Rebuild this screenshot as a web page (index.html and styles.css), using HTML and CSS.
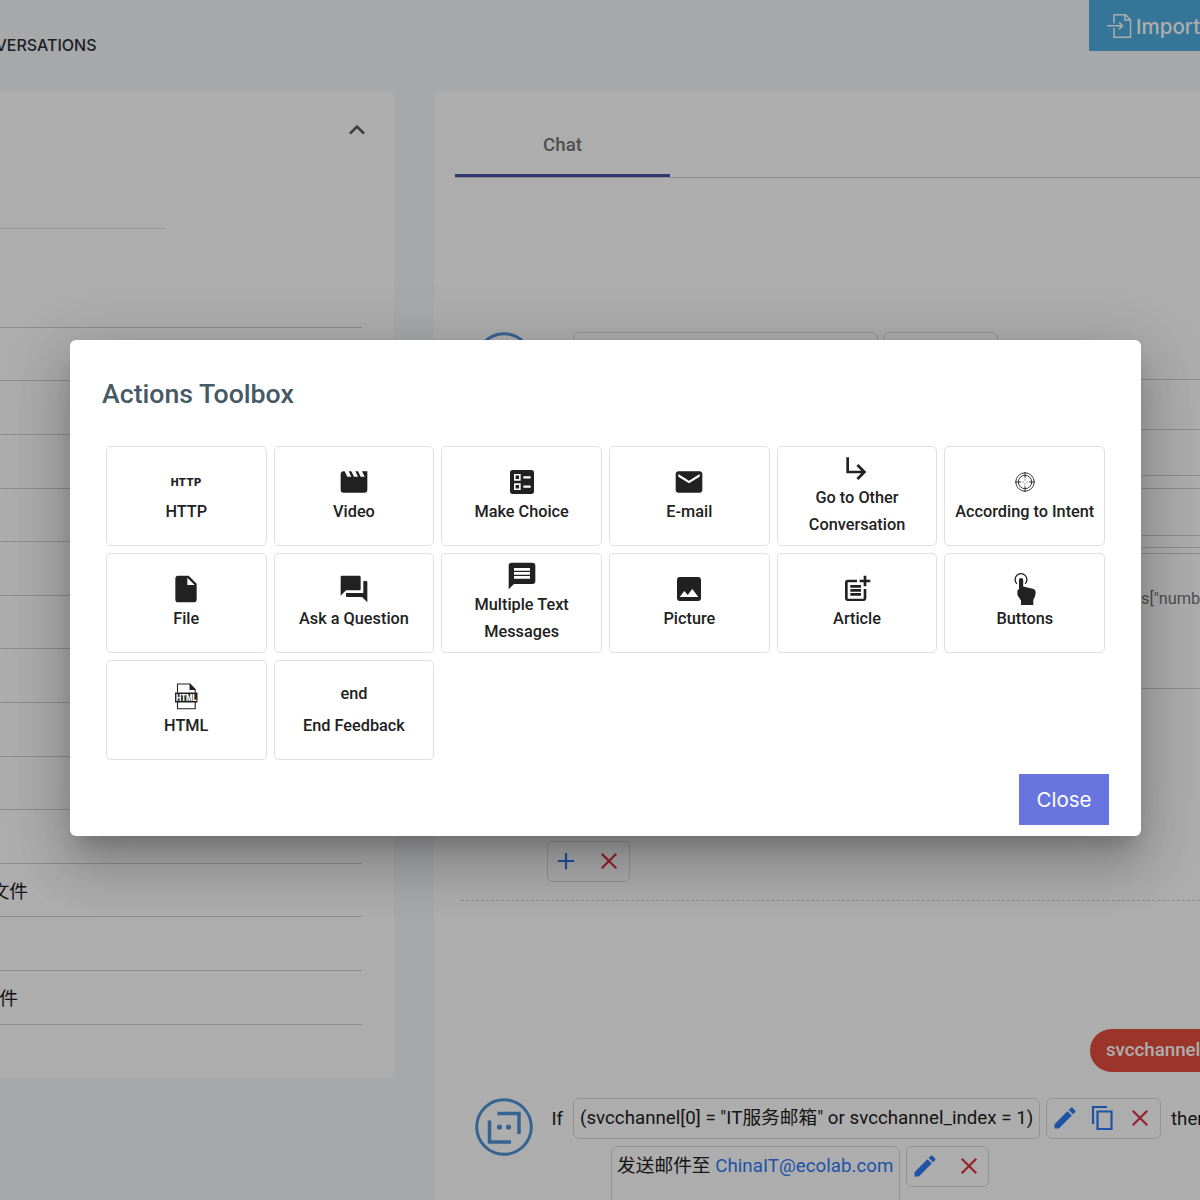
FILE: index.html
```
<!DOCTYPE html>
<html lang="en">
<head>
<meta charset="utf-8">
<title>Actions Toolbox</title>
<link rel="stylesheet" href="styles.css">
</head>
<body>
<svg class="defs" width="0" height="0">
  <symbol id="edit" viewBox="0 0 24 24"><path d="M3 17.25V21h3.75L17.81 9.94l-3.75-3.75L3 17.25zM20.71 7.04a1 1 0 0 0 0-1.41l-2.34-2.34a1 1 0 0 0-1.41 0l-1.83 1.83 3.75 3.75 1.83-1.83z"/></symbol>
  <symbol id="cross" viewBox="0 0 24 24"><path d="M5.300 5.300l13.400 13.400M18.700 5.300L5.300 18.700" fill="none" stroke="currentColor" stroke-width="2.1"/></symbol>
  <symbol id="bot" viewBox="0 0 58 58"><g fill="none" stroke="currentColor"><circle cx="29" cy="29" r="27.3" stroke-width="3"/><path d="M22.500 15.500h21.500v20.500M14.500 22.500v21.500h21.500" stroke-width="3.500"/></g><circle cx="24.500" cy="29" r="2.600" fill="currentColor"/><circle cx="33.500" cy="29" r="2.600" fill="currentColor"/></symbol>
</svg>
<div class="page">
  <header class="topbar">
    <div class="crumb"><span>CONVERSATIONS</span></div>
    <button class="import"><svg width="26" height="26" viewBox="0 0 26 26" fill="none" stroke="currentColor" stroke-width="1.5"><path d="M8 10.500V1.800h11.500l5 5v17.400H8V15M19 2v5h5.300M1 12.800h15.500M13 9.300l3.600 3.500-3.600 3.500"/></svg>Import</button>
  </header>
  <div class="columns">
    <aside class="sidebar">
      <div class="sidehead"><svg width="32" height="32" viewBox="0 0 24 24"><path d="M12 8l-6 6 1.410 1.410L12 10.830l4.590 4.580L18 14z"/></svg></div>
      <div class="search"></div>
      <ul class="list">
        <li class="first"></li><li></li><li></li><li></li><li></li><li></li><li></li><li></li><li></li><li></li><li></li>
        <li><span class="w28">文件</span></li><li></li><li><span class="w18">文件</span></li>
      </ul>
    </aside>
    <main class="chat">
      <nav class="tabs"><div class="tab">Chat</div></nav>
      <div class="turn one">
        <svg class="bot" width="58" height="58"><use href="#bot"/></svg>
        <div class="box b1"></div><div class="box b2"></div>
      </div>
      <div class="steps">
        <div class="step s1"></div><div class="step s2"></div><div class="step s3"></div><div class="step s4"></div><div class="step s5"></div><div class="step s6"></div>
        <div class="step s7">s["number"]</div>
      </div>
      <div class="box tools addrow"><svg width="26" height="26" viewBox="0 0 24 24" class="blue"><path d="M12 4.500v15M4.500 12h15" stroke="currentColor" stroke-width="2"/></svg><svg width="26" height="26" class="red"><use href="#cross"/></svg></div>
      <div class="dash"></div>
      <div class="reply"><span>svcchannel_index</span></div>
      <div class="turn two">
        <svg class="bot" width="58" height="58"><use href="#bot"/></svg>
        <span class="if">If</span>
        <div class="box cond"><span>(svcchannel[0] = "IT服务邮箱" or svcchannel_index = 1)</span></div>
        <div class="box tools t3"><svg width="28" height="28" class="blue"><use href="#edit"/></svg><svg width="26" height="26" viewBox="0 0 26 26" class="blue"><path d="M3 19V2h14M7.500 6.500h14v17.500h-14z" fill="none" stroke="currentColor" stroke-width="2.200"/></svg><svg width="26" height="26" class="red"><use href="#cross"/></svg></div>
        <span class="then">then</span>
      </div>
      <div class="turn three">
        <div class="box mail"><span>发送邮件至 <a>ChinaIT@ecolab.com</a></span></div>
        <div class="box tools t2"><svg width="28" height="28" class="blue"><use href="#edit"/></svg><svg width="26" height="26" class="red"><use href="#cross"/></svg></div>
      </div>
    </main>
  </div>
</div>
<div class="backdrop"></div>
<section class="modal" role="dialog">
  <h2>Actions Toolbox</h2>
  <div class="grid">
    <div class="tile"><i class="http">HTTP</i><b>HTTP</b></div>
    <div class="tile"><i><svg viewBox="0 0 24 24"><path d="M18 4l2 4h-3l-2-4h-2l2 4h-3l-2-4H8l2 4H7L5 4H4c-1.100 0-1.990.9-1.990 2L2 18c0 1.100.9 2 2 2h16c1.100 0 2-.9 2-2V4h-4z"/></svg></i><b>Video</b></div>
    <div class="tile"><i><svg viewBox="0 0 24 24"><path fill-rule="evenodd" d="M5 3h14a2 2 0 0 1 2 2v14a2 2 0 0 1-2 2H5a2 2 0 0 1-2-2V5a2 2 0 0 1 2-2zM6 6v5h5V6zM7.200 7.200h2.600v2.600H7.200zM6 13v5h5v-5zM7.200 14.200h2.600v2.600H7.200zM13 7.700v1.600h5.500V7.700zM13 14.700v1.600h5.500v-1.600z"/></svg></i><b>Make Choice</b></div>
    <div class="tile"><i><svg viewBox="0 0 24 24"><path d="M20 4H4c-1.100 0-1.990.9-1.990 2L2 18c0 1.100.9 2 2 2h16c1.100 0 2-.9 2-2V6c0-1.100-.9-2-2-2zm0 4l-8 5-8-5V6l8 5 8-5v2z"/></svg></i><b>E-mail</b></div>
    <div class="tile"><i><svg viewBox="0 0 24 24"><path d="M19 15l-6 6-1.420-1.420L15.170 16H4V4h2v10h9.170l-3.590-3.580L13 9l6 6z"/></svg></i><b>Go to Other Conversation</b></div>
    <div class="tile"><i><svg class="line" viewBox="0 0 32 32"><circle cx="16" cy="16" r="9.200"/><circle cx="16" cy="16" r="6.700"/><path d="M16 6v6M16 20v6M6 16h6M20 16h6M16 13.500v1M16 17.500v1M13.500 16h1M17.500 16h1"/></svg></i><b>According to Intent</b></div>
    <div class="tile"><i><svg viewBox="0 0 24 24"><path d="M6 2c-1.100 0-1.990.9-1.990 2L4 20c0 1.100.89 2 1.990 2H18c1.100 0 2-.9 2-2V8l-6-6H6zm7 7V3.500L18.500 9H13z"/></svg></i><b>File</b></div>
    <div class="tile"><i><svg viewBox="0 0 24 24"><path d="M21 6h-2v9H6v2c0 .55.450 1 1 1h11l4 4V7c0-.55-.450-1-1-1zm-4 6V3c0-.55-.450-1-1-1H3c-.55 0-1 .45-1 1v14l4-4h10c.55 0 1-.450 1-1z"/></svg></i><b>Ask a Question</b></div>
    <div class="tile"><i><svg viewBox="0 0 24 24"><path d="M20 2H4c-1.100 0-1.990.9-1.990 2L2 22l4-4h14c1.100 0 2-.9 2-2V4c0-1.100-.9-2-2-2zm-2 12H6v-2h12v2zm0-3H6V9h12v2zm0-3H6V6h12v2z"/></svg></i><b>Multiple Text Messages</b></div>
    <div class="tile"><i><svg viewBox="0 0 24 24"><path d="M21 19V5c0-1.100-.9-2-2-2H5c-1.100 0-2 .9-2 2v14c0 1.100.9 2 2 2h14c1.100 0 2-.9 2-2zM8.500 13.500l2.500 3.010L14.500 12l4.500 6H5l3.500-4.500z"/></svg></i><b>Picture</b></div>
    <div class="tile"><i><svg viewBox="0 0 24 24"><path d="M17 19.220H5V7h7V5H5c-1.100 0-2 .9-2 2v12c0 1.100.9 2 2 2h12c1.100 0 2-.9 2-2v-7h-2v7.220zM19 2h-2v3h-3c.010.010 0 2 0 2h3v2.990c.010.010 2 0 2 0V7h3V5h-3V2zM7 9h8v2H7zM7 12v2h8v-2h-8zM7 15h8v2H7z"/></svg></i><b>Article</b></div>
    <div class="tile"><i><svg viewBox="0 0 32 32"><path d="M9.400 13.300A5.900 5.900 0 1 1 17.600 13.300" fill="none" stroke="#212121" stroke-width="1.300" transform="translate(-1.500 -2.500)"/><path d="M10 7a2.100 2.100 0 0 1 4.200 0v6.500l9.500 2.200c1.800.5 3 1.600 2.900 3.500-.1 2.500-.7 5.300-2.300 7.600V32H12v-4.500L8.400 22V17.500L10 16z"/></svg></i><b>Buttons</b></div>
    <div class="tile"><i class="html"><svg viewBox="0 0 32 32"><path d="M7.500 12.500V4H20l5.200 5.500v3M7.500 22v6.700h17.700V22" fill="none" stroke="#212121" stroke-width="1.100"/><path d="M19.500 3.500l6.200 6.500h-6.200zM5 12.500h22.500v10H5z"/><text x="16.300" y="20.500" textLength="20.500" lengthAdjust="spacingAndGlyphs">HTML</text></svg></i><b>HTML</b></div>
    <div class="tile"><i class="end">end</i><b>End Feedback</b></div>
  </div>
  <button class="close">Close</button>
</section>
</body>
</html>
```
FILE: styles.css
```
* { box-sizing: border-box; }
body { margin: 0; width: 1200px; height: 1200px; overflow: hidden; position: relative; font-family: Roboto, "Noto Sans CJK SC", sans-serif; color: #212121; }
button { border: 0; }
svg { display: block; flex: none; }
.defs { position: absolute; }
.page { height: 1200px; overflow: hidden; background: #f6f8fb; }
.topbar { height: 91px; display: flex; justify-content: space-between; align-items: flex-start; }
.crumb { width: 96.500px; height: 91px; display: flex; justify-content: flex-end; overflow: hidden; font: 500 16px/91px Inter, sans-serif; color: #2b3038; }
.import { width: 111px; height: 51px; padding: 1px 0 0 17px; display: flex; align-items: center; gap: 4px; overflow: hidden; background: #4eaee1; color: #fff; font: 500 20.500px Inter, sans-serif; }
.columns { display: flex; gap: 40px; height: 1109px; }
.sidebar { width: 394px; height: 987px; flex: none; background: #fff; border-radius: 0 5px 5px 0; overflow: hidden; }
.sidehead { height: 79px; padding: 23px 21.500px 0 0; display: flex; justify-content: flex-end; fill: #5c5c5c; }
.search { width: 165px; height: 59px; border-bottom: 1px solid #e0e0e0; }
.list { list-style: none; margin: 0; padding: 0; width: 362px; }
.list li { height: 53.600px; border-bottom: 1px solid #cfcfcf; display: flex; align-items: center; font-size: 18.700px; }
.list li.first { height: 98.900px; }
.list span { display: flex; justify-content: flex-end; white-space: nowrap; margin-top: -2px; }
.w28 { width: 28px; }
.w18 { width: 18px; }
.chat { flex: none; width: 766px; background: #fff; overflow: hidden; font-size: 18.700px; }
.tabs { height: 87px; margin-left: 21px; border-bottom: 1px solid #cfcfcf; }
.tab { width: 215px; height: 86px; border-bottom: 3px solid #4553a5; text-align: center; line-height: 108px; font-weight: 500; color: #757575; }
.turn { display: flex; align-items: flex-start; white-space: nowrap; }
.bot { color: #4f94d4; }
.box { border: 1.500px solid #d9d9d9; border-radius: 6px; height: 41px; flex: none; }
.one { margin: 154px 0 0 41px; height: 47px; }
.b1 { width: 305px; margin-left: 40px; }
.b2 { width: 115px; margin-left: 5px; }
.steps { margin-left: 180px; height: 310px; }
.step { border-bottom: 1px solid #cdcdcd; }
.s1 { height: 1px; } .s2 { height: 50px; } .s3 { height: 46px; } .s4 { height: 13px; } .s5 { height: 47px; } .s6 { height: 12px; }
.s7 { height: 136px; border-top: 1px solid #cdcdcd; margin-top: 5px; padding-left: 527px; line-height: 89px; font-size: 16.300px; color: #757575; }
.tools { display: flex; align-items: center; padding-bottom: 2px; }
.blue { color: #2f7bf5; fill: #2f7bf5; }
.red { color: #dc3545; }
.addrow { margin: 152px 0 0 113px; width: 83px; padding-left: 5px; gap: 17px; }
.dash { margin: 18px 0 0 27px; border-top: 1.500px dashed #cfcfcf; }
.reply { display: flex; margin: 128px 0 0 656px; }
.reply span { height: 43px; border-radius: 22px 0 0 22px; background: #e54f3f; color: #fff; padding: 0 16px; line-height: 43px; font-weight: 500; }
.two { margin: 26px 0 0 41px; height: 48px; }
.two .bot { margin-right: 18.500px; }
.if, .then { line-height: 42px; flex: none; }
.if { width: 21.500px; }
.cond { width: 467px; padding-left: 6px; line-height: 39px; letter-spacing: .02px; }
.t3 { width: 115px; margin-left: 6px; padding-left: 4px; gap: 11px; }
.then { margin-left: 10px; }
.three { margin-left: 177px; }
.mail { width: 289px; height: 80px; padding-left: 5px; line-height: 38px; letter-spacing: .03px; }
.mail a { color: #2f7bf5; }
.t2 { width: 83px; margin-left: 6px; padding-left: 4px; gap: 17px; }
.backdrop { position: absolute; inset: 0; background: rgba(0, 0, 0, .32); }
.modal { position: absolute; left: 70px; top: 340px; width: 1071px; height: 496px; padding: 38px 32px 0; background: #fff; border-radius: 6px; box-shadow: 0 15px 20px -9px rgba(0, 0, 0, .2), 0 32px 51px 4px rgba(0, 0, 0, .14), 0 12px 62px 11px rgba(0, 0, 0, .12); }
h2 { margin: 0; font-size: 26.700px; line-height: 32px; font-weight: 500; color: #455a64; }
.grid { margin: 36px 4px 0; display: grid; grid-template-columns: repeat(6, 1fr); grid-auto-rows: 100px; gap: 7.200px; }
.tile { border: 1.500px solid #e0e0e0; border-radius: 5px; padding: 0 8px; display: flex; flex-direction: column; align-items: center; justify-content: center; text-align: center; }
.tile b { font-size: 16.300px; line-height: 26.800px; font-weight: 500; }
.tile i { height: 32px; font-style: normal; font-weight: 500; }
.tile i svg { width: 32px; height: 32px; margin-top: -.8px; fill: #212121; }
.tile i svg.line { fill: none; stroke: #212121; stroke-width: .9; }
.tile .http { font-size: 11.200px; line-height: 31px; font-weight: 900; letter-spacing: .5px; }
.tile .end { font-size: 16.300px; line-height: 26.800px; }
.html text { font: 900 8.500px Roboto, sans-serif; fill: #fff; text-anchor: middle; }
.close { display: block; margin: 13.600px 0 0 auto; width: 90px; height: 51px; background: #6875df; color: #fff; font: 400 20.500px Inter, sans-serif; }
```
